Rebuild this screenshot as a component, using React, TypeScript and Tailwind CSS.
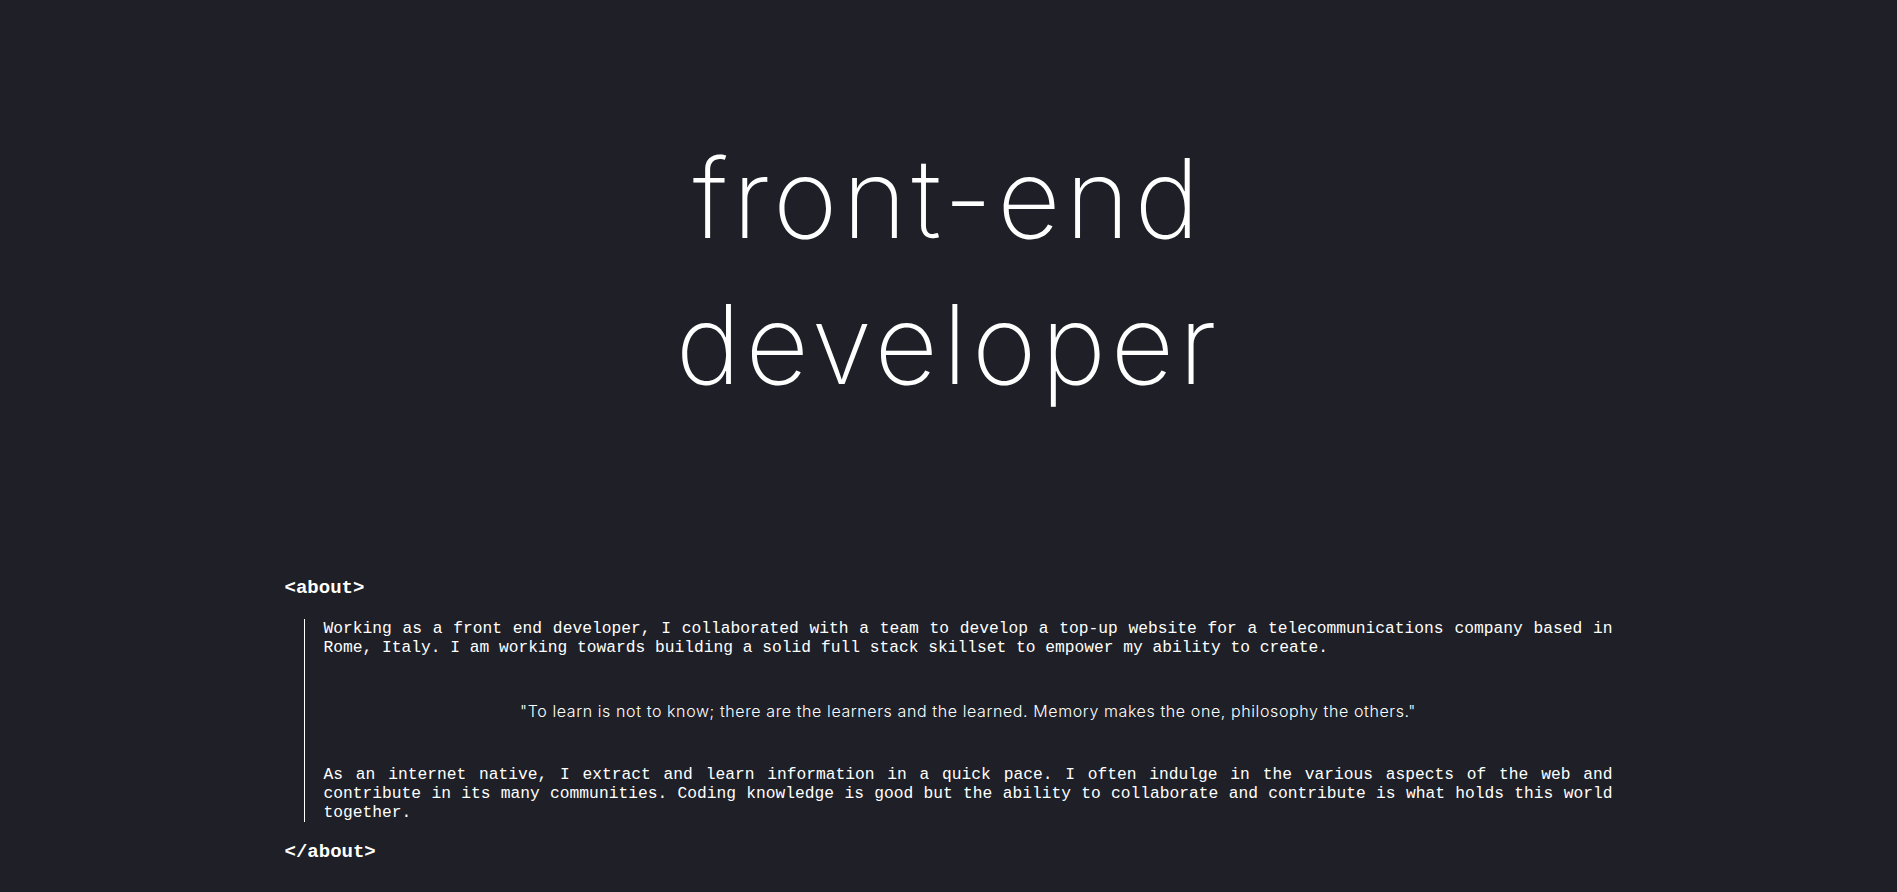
export default function App() {
  return (
    <div className="min-h-screen bg-[#1e1f27] text-white">
      <header className="h-[577px] pt-[125px] flex justify-center">
        <h1 className="text-center text-[110px] leading-[146px] font-[180] tracking-[4.7px] font-['Inter',sans-serif]">
          front-end
          <br />
          developer
        </h1>
      </header>

      <section className="w-[70%] mx-auto pb-10">
        <h2 className="font-['Liberation_Mono',monospace] font-bold text-[19px] leading-[22px]">
          &lt;about&gt;
        </h2>

        <div className="mt-[20px] ml-[19px] border-l border-white pl-[19px] font-['Liberation_Mono',monospace] text-[16.25px] leading-[19px]">
          <p className="text-justify">
            Working as a front end developer, I collaborated with a team to develop a top-up website for a
            telecommunications company based in Rome, Italy. I am working towards building a solid full stack
            skillset to empower my ability to create.
          </p>
          <p className="my-[42px] text-center font-['Inter',sans-serif] font-light text-[16px] leading-[24px] tracking-[0.6px]">
            "To learn is not to know; there are the learners and the learned. Memory makes the one, philosophy the
            others."
          </p>
          <p className="text-justify">
            As an internet native, I extract and learn information in a quick pace. I often indulge in the various
            aspects of the web and contribute in its many communities. Coding knowledge is good but the ability to
            collaborate and contribute is what holds this world together.
          </p>
        </div>

        <h2 className="mt-[19px] font-['Liberation_Mono',monospace] font-bold text-[19px] leading-[22px]">
          &lt;/about&gt;
        </h2>
      </section>
    </div>
  );
}
